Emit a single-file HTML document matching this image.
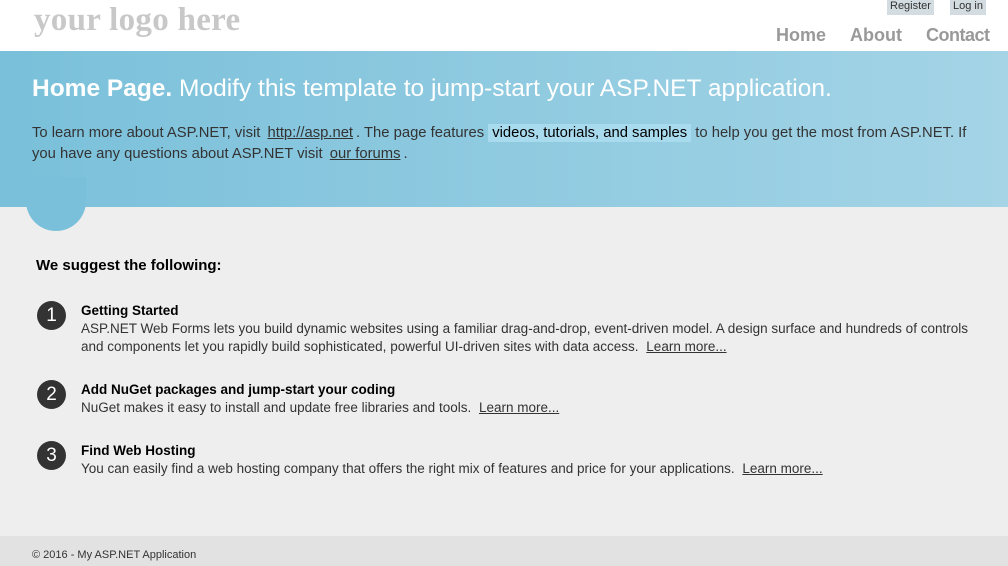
<!DOCTYPE html>
<html><head><style>
*{margin:0;padding:0;box-sizing:border-box}
body{width:1008px;height:566px;overflow:hidden;background:#eee;font-family:"Liberation Sans",sans-serif;color:#333;position:relative}
.hdr{position:absolute;left:0;top:0;width:1008px;height:51px;background:#fff}
.logo{position:absolute;left:34px;top:2px;font-family:"Liberation Serif",serif;font-size:33px;color:#c8c8c8;font-weight:bold;letter-spacing:0.3px}
.lg{position:absolute;top:0;font-size:11px;background:#d3dce0;color:#333;height:15px;line-height:13px;padding:0 3px}
.nav{position:absolute;top:25px;font-size:18px;color:#999;font-weight:bold}
.band{position:absolute;left:0;top:51px;width:1008px;height:156px;background:linear-gradient(to right,#7ac0da,#a4d4e6)}
.circ{position:absolute;left:26px;top:177px;width:60px;height:54px;border-radius:0 0 30px 30px;background:#7ac0da}
h1{position:absolute;left:32px;top:75px;font-size:24.5px;color:#fff;font-weight:normal;white-space:nowrap}
h1 b{font-weight:bold}
.intro{position:absolute;left:32px;top:123px;width:950px;font-size:14.8px;line-height:21px;color:#333}
.intro a{color:#333;text-decoration:underline;padding:0 3px}
.hl{background:#a9dbef;padding:1px 4px;color:#000}
.sug{position:absolute;left:36px;top:257px;font-size:15px;font-weight:bold;color:#000}
.item{position:absolute;left:81px;font-size:13.5px;line-height:18px;width:900px;color:#333}
.item b{color:#000;display:block}
.item a{color:#333;text-decoration:underline;margin-left:4px}
.num{position:absolute;left:37px;width:29px;height:29px;border-radius:50%;background:#333;color:#fff;font-size:19px;text-align:center;line-height:29px}
.foot{position:absolute;left:0;top:536px;width:1008px;height:30px;background:#e2e2e2;font-size:11px;padding:13px 32px;color:#333}
</style></head><body>
<div class="hdr">
<div class="logo">your logo here</div>
<div class="lg" style="left:887px">Register</div>
<div class="lg" style="left:950px">Log in</div>
<div class="nav" style="left:776px">Home</div>
<div class="nav" style="left:850px">About</div>
<div class="nav" style="left:926px;letter-spacing:-0.5px">Contact</div>
</div>
<div class="band"></div>
<div class="circ"></div>
<h1><b>Home Page.</b> Modify this template to jump-start your ASP.NET application.</h1>
<div class="intro">To learn more about ASP.NET, visit <a>http://asp.net</a>. The page features <span class="hl">videos, tutorials, and samples</span> to help you get the most from ASP.NET. If you have any questions about ASP.NET visit <a>our forums</a>.</div>
<div class="sug">We suggest the following:</div>
<div class="num" style="top:301px">1</div>
<div class="item" style="top:302px"><b>Getting Started</b>ASP.NET Web Forms lets you build dynamic websites using a familiar drag-and-drop, event-driven model. A design surface and hundreds of controls and components let you rapidly build sophisticated, powerful UI-driven sites with data access. <a>Learn more...</a></div>
<div class="num" style="top:380px">2</div>
<div class="item" style="top:381px"><b>Add NuGet packages and jump-start your coding</b>NuGet makes it easy to install and update free libraries and tools. <a>Learn more...</a></div>
<div class="num" style="top:441px">3</div>
<div class="item" style="top:442px"><b>Find Web Hosting</b>You can easily find a web hosting company that offers the right mix of features and price for your applications. <a>Learn more...</a></div>
<div class="foot">© 2016 - My ASP.NET Application</div>
</body></html>
